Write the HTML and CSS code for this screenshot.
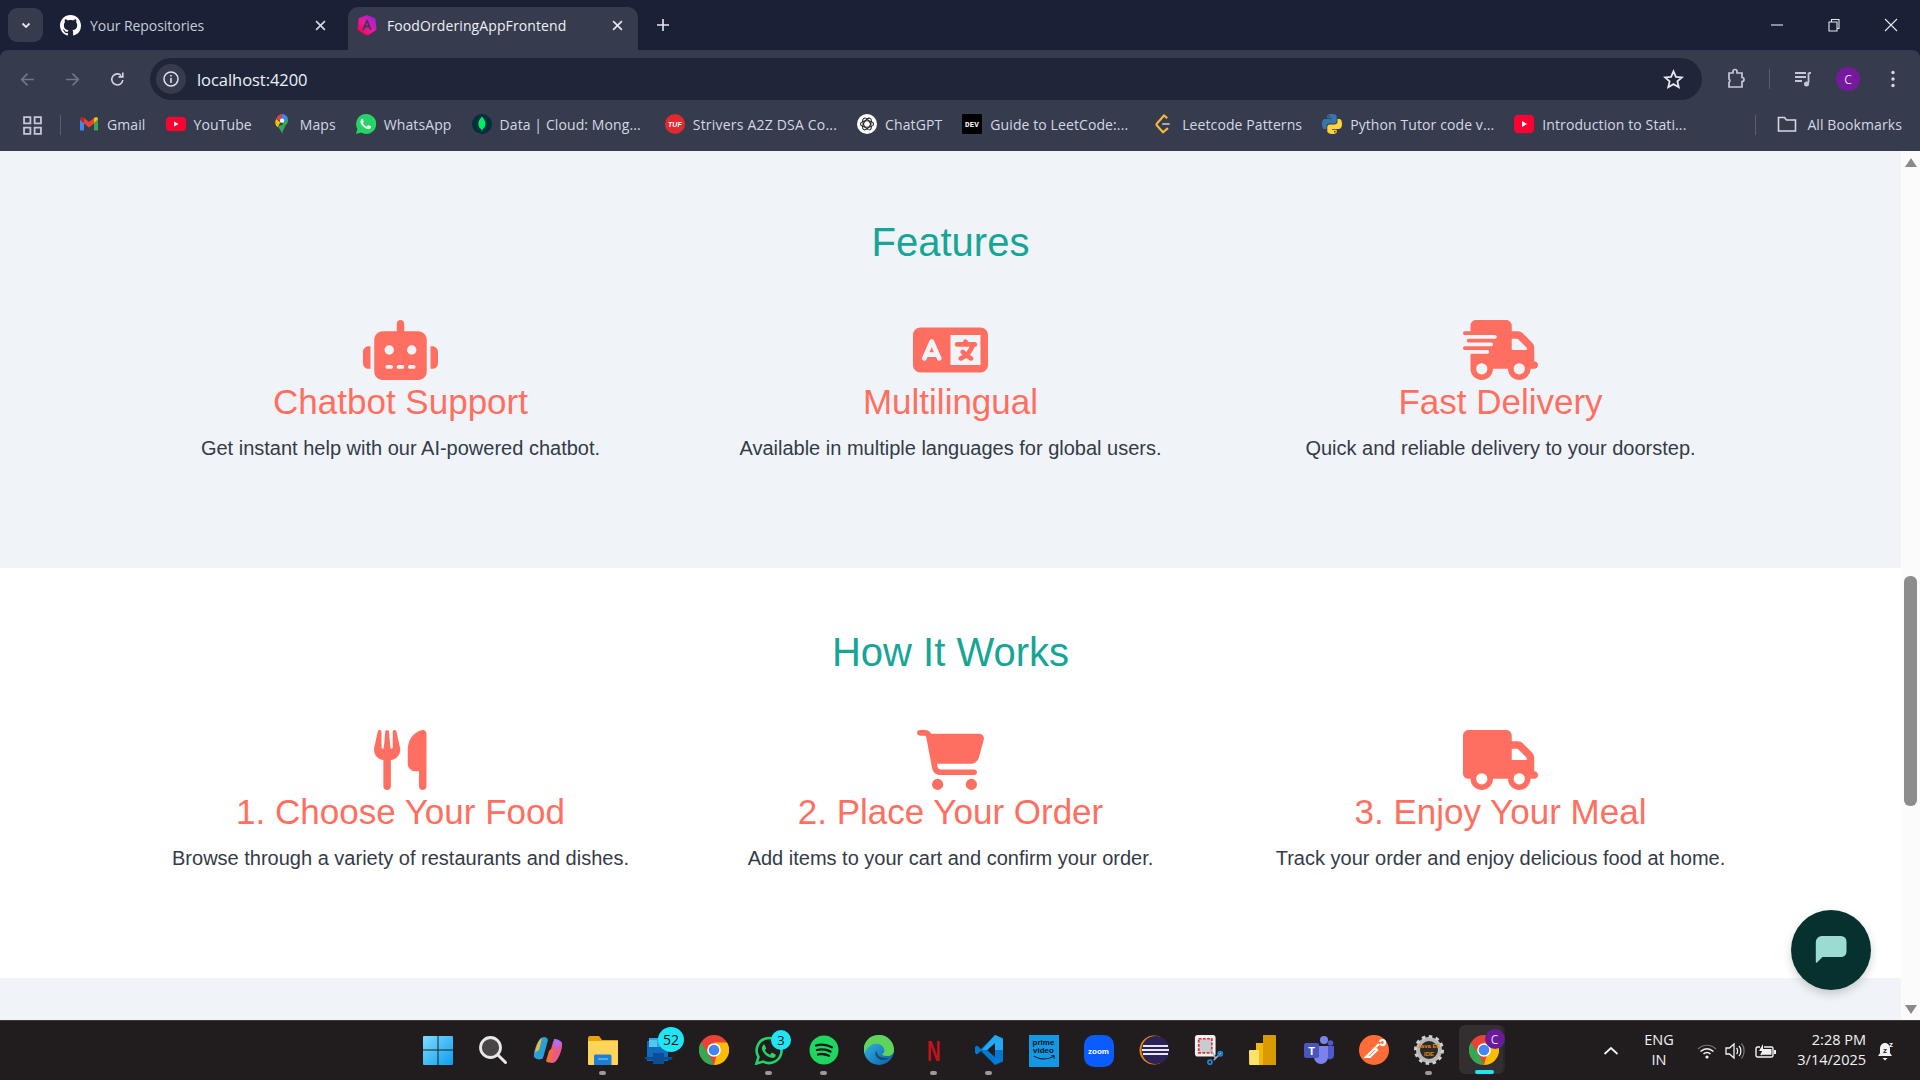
FILE: index.html
```html
<!DOCTYPE html>
<html lang="en">
<head>
<meta charset="utf-8">
<title>FoodOrderingAppFrontend</title>
<link rel="stylesheet" href="styles.css">
</head>
<body>
<div class="screen">
  <div class="tabstrip">
    <button class="tabsearch"><svg width="12" height="12" viewBox="0 0 12 12"><path d="M2.500 4.500 6 8l3.500-3.500" fill="none" stroke="#e3e5ee" stroke-width="1.800"/></svg></button>
    <div class="tab">
      <svg class="fav" viewBox="0 0 16 16"><path fill="#fff" d="M8 0C3.580 0 0 3.580 0 8c0 3.540 2.290 6.530 5.470 7.590.4.070.55-.17.55-.38 0-.19-.01-.82-.01-1.490-2.010.37-2.530-.49-2.690-.94-.09-.23-.48-.94-.82-1.130-.28-.15-.68-.52-.01-.53.63-.01 1.080.58 1.230.82.72 1.210 1.870.87 2.330.66.07-.52.28-.87.51-1.070-1.780-.2-3.640-.89-3.640-3.950 0-.87.31-1.590.82-2.150-.08-.2-.36-1.020.08-2.120 0 0 .67-.21 2.200.82.64-.18 1.320-.27 2-.27s1.360.09 2 .27c1.530-1.040 2.200-.82 2.200-.82.44 1.100.16 1.920.08 2.120.51.56.82 1.270.82 2.150 0 3.070-1.870 3.750-3.650 3.950.29.25.54.73.54 1.480 0 1.070-.01 1.930-.01 2.200 0 .21.15.46.55.38A8.010 8.010 0 0 0 16 8c0-4.420-3.580-8-8-8z"/></svg>
      <span class="tabtitle">Your Repositories</span>
      <svg class="tabclose" viewBox="0 0 10 10"><path d="M1 1l8 8M9 1l-8 8" stroke="#d5d8e2" stroke-width="1.500"/></svg>
    </div>
    <div class="tab active">
      <svg class="fav" viewBox="0 0 16 18"><defs><linearGradient id="ng" x1="0" y1="1" x2="1" y2="0"><stop offset="0" stop-color="#e40035"/><stop offset=".45" stop-color="#f0189c"/><stop offset="1" stop-color="#8a22e6"/></linearGradient></defs><path fill="url(#ng)" d="M8 0 14.800 2.600 15.800 12 9 16.500H7L.2 12 1.200 2.600zM8 3 4 12h1.800l.7-1.800h3l.7 1.800H12zM8 6.200l.9 2.400H7.100z"/></svg>
      <span class="tabtitle">FoodOrderingAppFrontend</span>
      <svg class="tabclose" viewBox="0 0 10 10"><path d="M1 1l8 8M9 1l-8 8" stroke="#e6e8f0" stroke-width="1.500"/></svg>
    </div>
    <svg class="newtab" viewBox="0 0 14 14"><path d="M7 1v12M1 7h12" stroke="#e6e8f0" stroke-width="1.600"/></svg>
    <div class="winctrls">
      <svg viewBox="0 0 14 14"><path d="M1 7h12" stroke="#e6e8f0" stroke-width="1.100"/></svg>
      <svg viewBox="0 0 14 14"><path d="M2 4h8v9H2zM4.500 4V1.500h7.500v9H10" fill="none" stroke="#e6e8f0" stroke-width="1.100"/></svg>
      <svg viewBox="0 0 14 14"><path d="M1 1l12 12M13 1 1 13" stroke="#e6e8f0" stroke-width="1.100"/></svg>
    </div>
  </div>

  <div class="toolbar">
    <svg class="navicon" viewBox="0 0 16 16"><path d="M14 8H3M8 2.500 2.500 8 8 13.500" fill="none" stroke="#72768a" stroke-width="1.500"/></svg>
    <svg class="navicon" viewBox="0 0 16 16"><path d="M2 8h11M8 2.500 13.500 8 8 13.500" fill="none" stroke="#72768a" stroke-width="1.500"/></svg>
    <svg class="navicon" viewBox="0 0 16 16"><path d="M13 8.500A5.200 5.200 0 1 1 11.500 4.200M13 1.500v4H9" fill="none" stroke="#d5d8e2" stroke-width="1.500"/></svg>
    <div class="omnibox">
      <div class="siteinfo"><svg width="18" height="18" viewBox="0 0 18 18"><circle cx="9" cy="9" r="7" fill="none" stroke="#dfe1ea" stroke-width="1.500"/><path d="M9 8v5M9 5v1.600" stroke="#dfe1ea" stroke-width="1.600"/></svg></div>
      <span class="url">localhost:4200</span>
      <svg class="star" viewBox="0 0 20 20"><path d="M10 2.200l2.300 5.300 5.700.5-4.300 3.800 1.300 5.600-5-3-5 3 1.300-5.600L2 8l5.700-.5z" fill="none" stroke="#e6e8f0" stroke-width="1.700"/></svg>
    </div>
    <div class="toolright">
      <svg class="ext" viewBox="0 0 20 22"><path d="M3 5h4V3.500a2 2 0 0 1 4 0V5h5v4.500a2 2 0 0 1 0 4V19H3v-4.500a2.200 2.200 0 0 0 0-3.500z" fill="none" stroke="#c4c8d6" stroke-width="1.700"/></svg>
      <span class="toolsep"></span>
      <svg class="media" viewBox="0 0 20 20"><path d="M2 4h11M2 8h11M2 12h7" stroke="#c4c8d6" stroke-width="1.800"/><path d="M15.500 4v10" stroke="#c4c8d6" stroke-width="1.800"/><path d="M15.500 4H18" stroke="#c4c8d6" stroke-width="1.800"/><circle cx="13.500" cy="15" r="2.500" fill="#c4c8d6"/></svg>
      <span class="avatar">C</span>
      <svg class="dots" viewBox="0 0 4 18"><circle cx="2" cy="2.500" r="1.700" fill="#d5d8e2"/><circle cx="2" cy="9" r="1.700" fill="#d5d8e2"/><circle cx="2" cy="15.500" r="1.700" fill="#d5d8e2"/></svg>
    </div>
  </div>

  <div class="bookmarks">
    <svg class="apps" viewBox="0 0 18 18"><path d="M1 1h6v6H1zM11 1h6v6h-6zM1 11h6v6H1zM11 11h6v6h-6z" fill="none" stroke="#c4c8d6" stroke-width="1.700"/></svg>
    <span class="bmsep"></span>
    <div class="bm"><svg viewBox="0 0 20 16"><path fill="#4285f4" d="M1 3.500v11h4V7z"/><path fill="#34a853" d="M15 7v7.500h4v-11z"/><path fill="#ea4335" d="M5 2v5.500l5 4 5-4V2l-5 4z"/><path fill="#c5221f" d="M1 3.500 5 7V2L3.500 1.200C2 .5 1 2 1 3.500z"/><path fill="#fbbc04" d="M19 3.500 15 7V2l1.500-.8C18 .5 19 2 19 3.500z"/></svg><span>Gmail</span></div>
    <div class="bm"><svg viewBox="0 0 20 20"><rect x="0" y="3" width="20" height="14" rx="3.500" fill="#ff0033"/><path d="M8 7.500v5l4.500-2.500z" fill="#fff"/></svg><span>YouTube</span></div>
    <div class="bm"><svg viewBox="0 0 20 24"><path fill="#34a853" d="M10 24c-1-4-3-6-5-9l5-2 4 1c-1 3-3 6-4 10z"/><path fill="#fbbc04" d="M3 14 C1 11 2 8 3 6l5 4-3 6z"/><path fill="#4285f4" d="M10 0c3 0 6 2 7 5l-5 6-4-3z"/><path fill="#ea4335" d="M3 6c1-3 4-6 7-6l-2 8z"/><path fill="#34a853" d="M17 5c1 3 0 6-3 9l-4-1 2-3z"/><circle cx="10" cy="8" r="2.600" fill="#fff"/></svg><span>Maps</span></div>
    <div class="bm"><svg viewBox="0 0 20 20"><path fill="#25d366" d="M10 0a10 10 0 0 0-8.600 15L0 20l5.200-1.400A10 10 0 1 0 10 0z"/><path fill="#fff" d="M6.800 4.500c-.4 0-1 .2-1.300.7-.6.7-1 1.600-1 2.700 0 1.200.9 2.500 1 2.700.2.200 1.800 2.800 4.400 3.900 2.100.8 2.600.7 3.100.6.600 0 1.600-.7 1.900-1.300.2-.6.2-1.200.1-1.300-.1-.1-.3-.2-.6-.4l-1.900-.9c-.3-.1-.5-.1-.7.2l-.8 1.100c-.2.200-.3.200-.6.100-1.700-.7-2.800-2-3.500-3.100-.1-.3 0-.4.200-.6l.6-.7c.1-.2.100-.4 0-.6l-.9-2c-.2-.6-.5-.5-.7-.5z"/></svg><span>WhatsApp</span></div>
    <div class="bm mongo"><svg viewBox="0 0 20 20"><circle cx="10" cy="10" r="10" fill="#02303c"/><path fill="#00ed64" d="M10 2.500c.8 1.600 3.500 3.600 3.500 7.400 0 3.200-2.200 4.800-3 5.300l-.3 2.300h-.5l-.3-2.300c-.8-.5-3-2.100-3-5.300 0-3.800 2.800-5.800 3.600-7.400z"/></svg><span>Data | Cloud: Mong...</span></div>
    <div class="bm striver"><svg viewBox="0 0 20 20"><circle cx="10" cy="10" r="10" fill="#e02a2f"/><text x="10" y="12.500" class="tuf">TUF</text></svg><span>Strivers A2Z DSA Co...</span></div>
    <div class="bm"><svg viewBox="0 0 20 20"><circle cx="10" cy="10" r="10" fill="#fff"/><g fill="none" stroke="#222" stroke-width="1.100"><ellipse cx="10" cy="10" rx="6.500" ry="3.300"/><ellipse cx="10" cy="10" rx="6.500" ry="3.300" transform="rotate(60 10 10)"/><ellipse cx="10" cy="10" rx="6.500" ry="3.300" transform="rotate(120 10 10)"/></g></svg><span>ChatGPT</span></div>
    <div class="bm"><svg viewBox="0 0 20 20"><rect width="20" height="20" rx="1.500" fill="#000"/><text x="10" y="13" class="dev">DEV</text></svg><span>Guide to LeetCode:...</span></div>
    <div class="bm leet"><svg viewBox="0 0 20 24"><path d="M12 1 3 11c-1 1-1 2 0 3l7 8 6-5M15 5l-3-3" fill="none" stroke="#f5b73d" stroke-width="2.600"/><path d="M9 12h9" stroke="#b3b3b3" stroke-width="2.200"/></svg><span>Leetcode Patterns</span></div>
    <div class="bm"><svg viewBox="0 0 20 20"><path fill="#3776ab" d="M9.800 0C5 0 5.300 2 5.300 2v2.200H10V5H3.300S0 4.600 0 9.900s2.800 5 2.800 5h1.700v-2.500s-.1-2.800 2.800-2.800h4.700s2.700 0 2.700-2.600V2.700S14.900 0 9.800 0zM7.200 1.500a.8.800 0 1 1 0 1.700.8.800 0 0 1 0-1.700z"/><path fill="#ffd43b" d="M10.200 20c4.800 0 4.500-2 4.500-2v-2.200H10V15h6.700s3.300.4 3.300-4.900-2.800-5-2.800-5h-1.700v2.500s.1 2.800-2.800 2.800H8s-2.700 0-2.700 2.600v4.300S5.100 20 10.200 20zm2.600-1.500a.8.800 0 1 1 0-1.700.8.800 0 0 1 0 1.700z"/></svg><span>Python Tutor code v...</span></div>
    <div class="bm"><svg viewBox="0 0 20 20"><rect y="1" width="20" height="18" rx="4" fill="#ff0033"/><path d="M8 7v6l5-3z" fill="#fff"/></svg><span>Introduction to Stati...</span></div>
    <div class="bmend">
      <span class="bmsep"></span>
      <div class="bm"><svg viewBox="0 0 20 20"><path d="M1.500 3.500h6l2 2.500h9v11h-17z" fill="none" stroke="#d5d8e2" stroke-width="1.600"/></svg><span>All Bookmarks</span></div>
    </div>
  </div>

  <div class="viewport">
    <main class="page">
      <section class="band tint first">
        <h2 class="heading">Features</h2>
        <div class="cards">
          <div class="card">
            <svg class="ficon wide" viewBox="0 0 640 512"><path d="M320 0c17.700 0 32 14.300 32 32V96H472c39.800 0 72 32.200 72 72V440c0 39.800-32.200 72-72 72H168c-39.800 0-72-32.200-72-72V168c0-39.800 32.200-72 72-72H288V32c0-17.700 14.300-32 32-32zM208 384c-8.800 0-16 7.200-16 16s7.200 16 16 16h32c8.800 0 16-7.200 16-16s-7.200-16-16-16H208zm96 0c-8.800 0-16 7.200-16 16s7.200 16 16 16h32c8.800 0 16-7.200 16-16s-7.200-16-16-16H304zm96 0c-8.800 0-16 7.200-16 16s7.200 16 16 16h32c8.800 0 16-7.200 16-16s-7.200-16-16-16H400zM264 256a40 40 0 1 0 -80 0 40 40 0 1 0 80 0zm152 40a40 40 0 1 0 0-80 40 40 0 1 0 0 80zM48 224H64V416H48c-26.500 0-48-21.500-48-48V272c0-26.500 21.500-48 48-48zm544 0c26.500 0 48 21.500 48 48v96c0 26.500-21.500 48-48 48H576V224h16z"/></svg>
            <h3 class="title">Chatbot Support</h3>
            <p class="desc">Get instant help with our AI-powered chatbot.</p>
          </div>
          <div class="card">
            <svg class="ficon wide" viewBox="0 0 640 512"><path d="M0 128C0 92.700 28.700 64 64 64H256h8 8H576c35.300 0 64 28.700 64 64V384c0 35.300-28.700 64-64 64H320h-8-8H64c-35.300 0-64-28.700-64-64V128zm320 0V384H576V128H320zM178.300 175.900c-3.200-7.200-10.400-11.900-18.300-11.900s-15.100 4.700-18.300 11.900l-64 144c-4.500 10.100 .1 21.900 10.200 26.400s21.900-.1 26.400-10.200l8.900-20.100h73.600l8.900 20.100c4.500 10.100 16.300 14.600 26.400 10.200s14.600-16.300 10.200-26.400l-64-144zM160 233.200L179 276H141l19-42.800zM448 164c11 0 20 9 20 20v4h44 16c11 0 20 9 20 20s-9 20-20 20h-2l-1.600 4.500c-8.900 24.400-22.400 46.600-39.600 65.400c.9 .6 1.800 1.100 2.700 1.600l18.900 11.300c9.500 5.700 12.500 18 6.900 27.400s-18 12.500-27.400 6.900l-18.900-11.300c-4.500-2.700-8.800-5.500-13.100-8.500c-10.600 7.500-21.900 14-34 19.400l-3.600 1.600c-10.100 4.500-21.900-.1-26.400-10.200s.1-21.900 10.200-26.400l3.600-1.600c6.400-2.900 12.600-6.100 18.500-9.800l-12.200-12.200c-7.800-7.800-7.800-20.500 0-28.300s20.500-7.800 28.300 0l14.600 14.600 .5 .5c12.400-13.100 22.500-28.300 29.800-45H448 376c-11 0-20-9-20-20s9-20 20-20h52v-4c0-11 9-20 20-20z"/></svg>
            <h3 class="title">Multilingual</h3>
            <p class="desc">Available in multiple languages for global users.</p>
          </div>
          <div class="card">
            <svg class="ficon wide" viewBox="0 0 640 512"><path d="M112 0C85.500 0 64 21.500 64 48V96H16c-8.800 0-16 7.200-16 16s7.200 16 16 16H64 272c8.800 0 16 7.200 16 16s-7.200 16-16 16H64 48c-8.800 0-16 7.200-16 16s7.200 16 16 16H64 240c8.800 0 16 7.200 16 16s-7.200 16-16 16H64 16c-8.800 0-16 7.200-16 16s7.200 16 16 16H64 208c8.800 0 16 7.200 16 16s-7.200 16-16 16H64V416c0 53 43 96 96 96s96-43 96-96H384c0 53 43 96 96 96s96-43 96-96h32c17.700 0 32-14.300 32-32s-14.300-32-32-32V288 256 237.300c0-17-6.700-33.300-18.700-45.300L512 114.700c-12-12-28.300-18.700-45.300-18.700H416V48c0-26.500-21.500-48-48-48H112zM544 237.300V256H416V160h50.700L544 237.300zM160 368a48 48 0 1 1 0 96 48 48 0 1 1 0-96zm272 48a48 48 0 1 1 96 0 48 48 0 1 1 -96 0z"/></svg>
            <h3 class="title">Fast Delivery</h3>
            <p class="desc">Quick and reliable delivery to your doorstep.</p>
          </div>
        </div>
      </section>
      <section class="band white">
        <h2 class="heading">How It Works</h2>
        <div class="cards">
          <div class="card">
            <svg class="ficon fork" viewBox="0 0 448 512"><path d="M416 0C400 0 288 32 288 176V288c0 35.300 28.700 64 64 64h32V480c0 17.700 14.300 32 32 32s32-14.300 32-32V352 240 32c0-17.700-14.300-32-32-32zM64 16C64 7.800 57.900 1 49.700 .1S34.200 4.600 32.400 12.500L2.100 148.800C.7 155.100 0 161.500 0 167.900c0 45.900 35.100 83.600 80 87.700V480c0 17.700 14.300 32 32 32s32-14.300 32-32V255.600c44.900-4.100 80-41.800 80-87.700c0-6.400-.7-12.800-2.100-19.100L191.600 12.500c-1.800-8-9.300-13.300-17.400-12.400S160 7.800 160 16V150.200c0 5.400-4.400 9.800-9.800 9.800c-5.100 0-9.300-3.900-9.800-9L127.900 14.600C127.200 6.300 120.300 0 112 0s-15.200 6.300-15.900 14.600L83.700 151c-.5 5.100-4.700 9-9.800 9c-5.400 0-9.800-4.400-9.800-9.800V16zm48.300 152l-.3 0-.3 0 .3-.7 .3 .7z"/></svg>
            <h3 class="title">1. Choose Your Food</h3>
            <p class="desc">Browse through a variety of restaurants and dishes.</p>
          </div>
          <div class="card">
            <svg class="ficon cart" viewBox="0 0 576 512"><path d="M0 24C0 10.700 10.700 0 24 0H69.500c22 0 41.500 12.800 50.600 32h411c26.300 0 45.500 25 38.600 50.400l-41 152.300c-8.500 31.400-37 53.300-69.500 53.300H170.700l5.400 28.500c2.200 11.300 12.100 19.500 23.600 19.500H488c13.300 0 24 10.700 24 24s-10.700 24-24 24H199.700c-34.600 0-64.300-24.600-70.700-58.500L77.400 54.500c-.7-3.800-4-6.500-7.900-6.500H24C10.700 48 0 37.300 0 24zM128 464a48 48 0 1 1 96 0 48 48 0 1 1 -96 0zm336-48a48 48 0 1 1 0 96 48 48 0 1 1 0-96z"/></svg>
            <h3 class="title">2. Place Your Order</h3>
            <p class="desc">Add items to your cart and confirm your order.</p>
          </div>
          <div class="card">
            <svg class="ficon wide" viewBox="0 0 640 512"><path d="M48 0C21.500 0 0 21.500 0 48V368c0 26.500 21.500 48 48 48H64c0 53 43 96 96 96s96-43 96-96H384c0 53 43 96 96 96s96-43 96-96h32c17.700 0 32-14.300 32-32s-14.300-32-32-32V288 256 237.300c0-17-6.700-33.300-18.700-45.300L512 114.700c-12-12-28.300-18.700-45.300-18.700H416V48c0-26.500-21.500-48-48-48H48zM416 160h50.700L544 237.300V256H416V160zM112 416a48 48 0 1 1 96 0 48 48 0 1 1 -96 0zm368-48a48 48 0 1 1 0 96 48 48 0 1 1 0-96z"/></svg>
            <h3 class="title">3. Enjoy Your Meal</h3>
            <p class="desc">Track your order and enjoy delicious food at home.</p>
          </div>
        </div>
      </section>
      <section class="band tint"></section>
    </main>
    <div class="scrollbar">
      <span class="arrow up"></span>
      <div class="track"><span class="thumb"></span></div>
      <span class="arrow down"></span>
    </div>
    <button class="chatbtn"><svg width="32" height="30" viewBox="0 0 32 30"><path fill="#9bdcd0" d="M7 1h19a5.500 5.500 0 0 1 5.500 5.500v10A5.500 5.500 0 0 1 26 22H7.500L2 27.500c-.6.500-1.200.200-1.200-.6V7A6 6 0 0 1 7 1z"/></svg></button>
  </div>

  <div class="taskbar">
    <div class="tbicons">
      <div class="tbi"><svg viewBox="0 0 30 30"><defs><linearGradient id="w" x1="0" y1="0" x2="1" y2="1"><stop offset="0" stop-color="#7fdcfc"/><stop offset="1" stop-color="#0c9df0"/></linearGradient></defs><path fill="url(#w)" d="M1 1h13.500v13.500H0V2a1 1 0 0 1 1-1zM15.500 1H29a1 1 0 0 1 1 1v12.500H15.500zM0 15.500h14.500V30H1a1 1 0 0 1-1-1zM15.500 15.500H30V29a1 1 0 0 1-1 1H15.500z"/></svg></div>
      <div class="tbi"><svg viewBox="0 0 30 30"><circle cx="12.500" cy="12.500" r="10" fill="#4a4547" stroke="#e8e8e8" stroke-width="2.800"/><path d="M20 20l7.500 7.500" stroke="#e8e8e8" stroke-width="3" stroke-linecap="round"/></svg></div>
      <div class="tbi"><svg viewBox="0 0 30 30"><path fill="#2a9fd8" d="M8 3c3-2 6-1 7 2l-5 18c-1 2-7 2-9-1-1-4 3-16 7-19z"/><path fill="#f2b93b" d="M4 10c1-3 3-6 5-7l-3 12c-1 1-3 1-4 3 0-2 1-5 2-8z"/><path fill="#e85a8a" d="M22 27c-3 2-6 1-7-2l5-18c1-2 7-2 9 1 1 4-3 16-7 19z"/><path fill="#f0703c" d="M13 26l3-10c1-2 3-2 5-1l-3 11c-1 2-3 2-5 0z"/><path fill="#b56df0" d="M21 4c3 0 7 1 8 5l-6 4c-2-3-3-6-2-9z"/></svg></div>
      <div class="tbi"><svg viewBox="0 0 30 30"><path fill="#e8a40c" d="M0 3a2 2 0 0 1 2-2h9l3 4h16v4H0z"/><path fill="#ffd45a" d="M0 6h30v23a1 1 0 0 1-1 1H1a1 1 0 0 1-1-1z"/><path fill="#1c7fd4" d="M6 21a1.500 1.500 0 0 1 1.500-1.500H22A1.500 1.500 0 0 1 23.500 21V30H6z"/><path d="M10 24h10" stroke="#7fc4f4" stroke-width="1.200"/></svg><i class="run"></i></div>
      <div class="tbi"><svg viewBox="0 0 30 30"><path fill="#0f6cbd" d="M3 6h21v20H3z"/><path fill="#28a8ea" d="M5 3h14v9H5z"/><path fill="#50c8f0" d="M5 5h8v7H5z"/><path fill="#0a4f96" d="M0 22h29l-2 3H3zM9 18h11v11H9z"/></svg><b class="badge big">52</b></div>
      <div class="tbi"><svg viewBox="0 0 30 30"><circle cx="15" cy="15" r="15" fill="#ea4335"/><path fill="#34a853" d="M2 7.500 10 20l5 10A15 15 0 0 1 2 7.500z"/><path fill="#fbbc04" d="M28 7.500H15l5 4-5 18.500A15 15 0 0 0 28 7.500z"/><circle cx="15" cy="15" r="6.800" fill="#fff"/><circle cx="15" cy="15" r="5.300" fill="#4285f4"/></svg></div>
      <div class="tbi"><svg viewBox="0 0 30 30"><path d="M15 3A12.500 12.500 0 0 0 4.500 22L2.500 28.500l6.800-1.900A12.500 12.500 0 1 0 15 3z" fill="none" stroke="#25d366" stroke-width="2.600"/><path fill="#25d366" d="M11 9c-.6 0-1.400.3-1.800 1-.8.900-1.300 2.100-1.300 3.500 0 1.600 1.200 3.300 1.300 3.500.3.300 2.400 3.700 5.800 5.100 2.700 1 3.400.9 4 .8.800 0 2.100-.9 2.500-1.700.3-.8.300-1.600.1-1.700l-3.300-1.700c-.4-.1-.6-.1-.9.300l-1 1.400c-.3.300-.4.300-.8.100-2.200-.9-3.700-2.600-4.600-4.100-.1-.4 0-.5.300-.8l.8-.9c.1-.3.100-.5 0-.8l-1.200-2.600c-.3-.8-.7-.7-.9-.7z"/></svg><b class="badge small">3</b><i class="run"></i></div>
      <div class="tbi"><svg viewBox="0 0 30 30"><circle cx="15" cy="15" r="14.500" fill="#1ed760"/><path d="M7 10.500c5-1.500 11-1 16 1.800M8 15c4.500-1.200 9.500-.7 13.500 1.600M9 19.500c3.500-.9 7.500-.5 11 1.300" fill="none" stroke="#1c1a1b" stroke-width="2.300" stroke-linecap="round"/></svg><i class="run"></i></div>
      <div class="tbi"><svg viewBox="0 0 30 30"><defs><linearGradient id="e" x1="0" y1="0" x2="1" y2="1"><stop offset="0" stop-color="#35c1f1"/><stop offset="1" stop-color="#0c59a4"/></linearGradient></defs><circle cx="15" cy="15" r="15" fill="url(#e)"/><path fill="#5fd35a" d="M15 0a15 15 0 0 1 15 15c0 4-3 6-7 6-3 0-5-1-5-2 3-1 3-4 1-7-3-4-9-4-13-1-3 2-5 5-6 8A15 15 0 0 1 15 0z"/><path fill="#1c1a1b" opacity=".5" d="M12 16c-2 3 0 8 6 9 3 0 5-1 7-2-3 0-9 0-11-3-1-2-1-3-2-4z"/></svg></div>
      <div class="tbi"><span class="netflix">N</span><i class="run"></i></div>
      <div class="tbi"><svg viewBox="0 0 30 30"><path fill="#0078d4" d="M21 0 29 3.500v23L21 30 7 16l-4 3.500-2-1.500v-6l2-1.500L7 14 21 0zM21 8l-8 7 8 7z"/><path fill="#23a9f2" d="M21 0 29 3.500V15H21V8l-8 7H8z"/></svg><i class="run"></i></div>
      <div class="tbi"><span class="prime"><b>prime<br>video</b><svg viewBox="0 0 24 5" width="22" height="5"><path d="M1 1c6 4 15 4 21 .5M20 .5h3v3" fill="none" stroke="#111" stroke-width="1.100"/></svg></span></div>
      <div class="tbi"><span class="zoomapp">zoom</span></div>
      <div class="tbi"><svg viewBox="0 0 30 30"><circle cx="15" cy="15" r="14.500" fill="#e8890c"/><circle cx="16.500" cy="15" r="14" fill="#2c2255"/><path d="M4 11h25M3 15h27M4 19h25" stroke="#e8e6f4" stroke-width="2"/></svg></div>
      <div class="tbi"><svg viewBox="0 0 30 32"><rect x="0" y="0" width="22" height="23" rx="3" fill="#f1f1f1"/><rect x="4" y="4" width="14" height="15" fill="#c8ccd2" stroke="#d8332c" stroke-width="1.800" stroke-dasharray="3 1.500"/><path d="M17 15l5 10M28 19l-8 8" stroke="#aeb4bc" stroke-width="1.600"/><circle cx="16" cy="29" r="2.200" fill="none" stroke="#1c88d8" stroke-width="1.800"/><circle cx="27" cy="20" r="2.200" fill="none" stroke="#1c88d8" stroke-width="1.800"/></svg></div>
      <div class="tbi"><svg viewBox="0 0 30 30"><path fill="#f2c811" d="M0 16h11v14H1a1 1 0 0 1-1-1z"/><path fill="#f0b90b" d="M7 8h12v22H7z"/><path fill="#d99a00" d="M14 0h12a1 1 0 0 1 1 1v29H14z"/><path fill="#fbe26c" d="M0 16a1 1 0 0 1 1-1h9v15H1z"/></svg></div>
      <div class="tbi"><svg viewBox="0 0 30 30"><circle cx="20" cy="5" r="4" fill="#7b83eb"/><circle cx="26.500" cy="8" r="2.800" fill="#5059c9"/><path fill="#5059c9" d="M23 11h7v9a4 4 0 0 1-7 3z"/><path fill="#7b83eb" d="M10 11h14v11a7 7 0 0 1-14 0z"/><rect x="0" y="8" width="15" height="15" rx="2" fill="#4b53bc"/><text x="7.500" y="20" class="teams">T</text></svg></div>
      <div class="tbi"><svg viewBox="0 0 30 30"><circle cx="15" cy="15" r="15" fill="#ff6c37"/><path d="M7 22l9-9 2 2-7 7zM17 12l3-3M21 7a2.500 2.500 0 1 1 2 3l-2-1" fill="none" stroke="#fff" stroke-width="2.200"/></svg></div>
      <div class="tbi"><svg viewBox="0 0 30 30"><circle cx="15" cy="15" r="11" fill="#2a2a2a" stroke="#b8b8b8" stroke-width="4"/><circle cx="15" cy="15" r="13.500" fill="none" stroke="#d0d0d0" stroke-width="3" stroke-dasharray="3.500 3.500"/><text x="15" y="13" class="java">Java EE</text><text x="15" y="21" class="java">IDE</text></svg><i class="run"></i></div>
      <div class="tbi activeapp"><svg viewBox="0 0 30 30"><circle cx="15" cy="15" r="15" fill="#ea4335"/><path fill="#34a853" d="M2 7.500 10 20l5 10A15 15 0 0 1 2 7.500z"/><path fill="#fbbc04" d="M28 7.500H15l5 4-5 18.500A15 15 0 0 0 28 7.500z"/><circle cx="15" cy="15" r="6.800" fill="#fff"/><circle cx="15" cy="15" r="5.300" fill="#4285f4"/></svg><b class="badge purple">C</b><i class="runline"></i></div>
    </div>
    <div class="tray">
      <svg class="chev" viewBox="0 0 16 10"><path d="M1.500 8 8 2l6.500 6" fill="none" stroke="#f2f2f2" stroke-width="1.800"/></svg>
      <div class="lang"><span>ENG</span><span>IN</span></div>
      <svg class="wifi" viewBox="0 0 20 16"><path d="M1 6c5-5 13-5 18 0" fill="none" stroke="#777" stroke-width="1.200"/><path d="M3.500 8.500c4-3.500 9-3.500 13 0M6.500 11c2-2 5-2 7 0" fill="none" stroke="#f2f2f2" stroke-width="1.500"/><circle cx="10" cy="14" r="1.600" fill="#f2f2f2"/></svg>
      <svg class="vol" viewBox="0 0 20 18"><path d="M1 6h3.500L9 2v14l-4.500-4H1z" fill="none" stroke="#f2f2f2" stroke-width="1.300"/><path d="M11.500 6c1.500 1.500 1.500 4.500 0 6M14 4c2.500 2.500 2.500 7.500 0 10" fill="none" stroke="#f2f2f2" stroke-width="1.300"/><path d="M16.500 1.500c3.500 4 3.500 11 0 15" fill="none" stroke="#777" stroke-width="1.200"/></svg>
      <svg class="batt" viewBox="0 0 22 16"><path d="M5 4H2.500A1.500 1.500 0 0 0 1 5.500v7A1.500 1.500 0 0 0 2.500 14h14a1.500 1.500 0 0 0 1.500-1.500v-7A1.500 1.500 0 0 0 16.500 4H9" fill="none" stroke="#f2f2f2" stroke-width="1.400"/><path d="M8 1 4 8h3l-1 5 5-7H8z" fill="#f2f2f2"/><path d="M19 7h2v4h-2z" fill="#f2f2f2"/><path d="M3 11.800h13.500V6H9l-4 5.800z" fill="#f2f2f2"/></svg>
      <div class="clock"><span>2:28 PM</span><span>3/14/2025</span></div>
      <svg class="bell" viewBox="0 0 18 20"><path d="M9 2c3 0 5 2.500 5 5.500V12l2 3H2l2-3V7.500C4 4.500 6 2 9 2zM6.500 17h5L9 19.500z" fill="#f2f2f2"/><text x="9" y="12" class="zz">z</text><text x="15" y="6" class="zz2">z</text></svg>
    </div>
  </div>
</div>
</body>
</html>
```
FILE: styles.css
```css
* { box-sizing: border-box; }
html, body { margin: 0; padding: 0; height: 100%; overflow: hidden; }
body { font-family: "Open Sans", "Noto Sans", sans-serif; }
button { border: 0; padding: 0; }
svg { display: block; }

.screen { width: 1920px; height: 1080px; display: flex; flex-direction: column; background: #1a2035; position: relative; }

/* tab strip */
.tabstrip { height: 50px; flex: none; display: flex; align-items: flex-end; padding-left: 8px; background: #1a2035; color: #e6e8f0; }
.tabsearch { width: 35px; height: 34px; margin-bottom: 8px; border-radius: 9px; background: #363b4e; display: flex; align-items: center; justify-content: center; flex: none; }
.tab { width: 300px; height: 43px; display: flex; align-items: center; padding: 0 22.500px 6px 12px; margin-left: 5px; border-radius: 10px 10px 0 0; font-size: 14px; color: #c8cbd8; flex: none; }
.tab.active { width: 290px; margin-left: 0; background: #363b4e; color: #eef0f6; padding: 0 15.500px 6px 9px; }
.fav { width: 21px; height: 21px; flex: none; }
.tab.active .fav { width: 20px; height: 22px; }
.tabtitle { margin-left: 9px; flex: 1; white-space: nowrap; letter-spacing: -.05px; }
.tab.active .tabtitle { margin-left: 10px; letter-spacing: .1px; }
.tabclose { width: 11px; height: 11px; flex: none; }
.newtab { width: 14px; height: 14px; margin: 0 0 18px 18px; flex: none; }
.winctrls { margin-left: auto; display: flex; gap: 43px; padding-right: 22px; margin-bottom: 18px; }
.winctrls svg { width: 14px; height: 14px; }

/* toolbar */
.toolbar { height: 54px; flex: none; display: flex; align-items: flex-start; padding: 8px 0 0 19px; background: #363b4e; border-radius: 8px 8px 0 0; }
.navicon { width: 17px; height: 17px; margin: 13px 28px 0 0; flex: none; }
.omnibox { width: 1552px; height: 42px; margin-left: -4px; border-radius: 21px; background: #20263a; display: flex; align-items: center; padding: 0 18px 0 6px; flex: none; }
.siteinfo { width: 30px; height: 30px; border-radius: 50%; background: #363b4e; display: flex; align-items: center; justify-content: center; flex: none; }
.url { margin-left: 11px; font-size: 16.500px; color: #eef0f6; letter-spacing: -.05px; }
.star { width: 21px; height: 21px; margin-left: auto; }
.toolright { flex: 1; display: flex; align-items: center; height: 42px; padding-left: 24px; }
.ext { width: 20px; height: 22px; }
.toolsep { width: 1px; height: 20px; background: #5a5e70; margin: 0 23px 0 23px; }
.media { width: 20px; height: 20px; }
.avatar { width: 24px; height: 24px; margin-left: 23px; border-radius: 50%; background: #76199f; color: #e9d6f2; font-size: 12px; display: flex; align-items: center; justify-content: center; }
.dots { width: 4px; height: 18px; margin-left: 31px; }

/* bookmarks */
.bookmarks { height: 47px; flex: none; display: flex; align-items: flex-start; padding: 7px 0 0 23px; background: #363b4e; font-size: 14px; color: #d5d8e2; }
.apps { width: 19px; height: 19px; margin-top: 5px; flex: none; }
.bmsep { width: 1px; height: 20px; background: #5a5e70; margin-top: 4px; flex: none; }
.bookmarks > .bmsep { margin: 4px 18px 0 18px; }
.bm { display: flex; align-items: center; height: 26px; margin-right: 20px; white-space: nowrap; flex: none; letter-spacing: .1px; }
.bm svg { width: 20px; height: 20px; margin-right: 8px; flex: none; }
.bm.mongo { margin-right: 24px; }
.bm.striver { letter-spacing: .2px; }
.bm.leet svg { margin: 0 9px 0 5px; }
.bmend { margin-left: auto; display: flex; }
.bmend .bmsep { margin-right: 21px; }
.bmend .bm { margin-right: 18px; }
.bmend .bm svg { margin-right: 10px; }
.tuf { font: italic 700 7px "Liberation Sans", sans-serif; fill: #fff; text-anchor: middle; }
.dev { font: 700 7.500px "Liberation Mono", monospace; fill: #fff; text-anchor: middle; }

/* page */
.viewport { height: 869px; flex: none; display: flex; position: relative; overflow: hidden; }
.page { flex: 1; min-width: 0; font-family: "Liberation Sans", Arial, sans-serif; }
.band { height: 410px; padding-top: 61px; }
.band.first { height: 417px; padding-top: 68px; }
.tint { background: #f0f4f8; }
.white { background: #fff; }
.heading { margin: 0 0 55px; font-size: 40px; line-height: 46px; font-weight: 400; color: #16a596; text-align: center; }
.cards { display: grid; grid-template-columns: repeat(3, 550px); justify-content: center; }
.card { text-align: center; }
.ficon { height: 60px; margin: 0 auto; fill: #ff6f61; }
.wide { width: 75px; }
.fork { width: 52.500px; }
.cart { width: 67.500px; }
.title { margin: 3px 0 17px; font-size: 35px; line-height: 37px; font-weight: 400; color: #ff6f61; }
.desc { margin: 0; font-size: 20px; line-height: 23px; color: #333b48; white-space: nowrap; }

.scrollbar { width: 19px; flex: none; background: #fbfbfb; display: flex; flex-direction: column; align-items: center; }
.arrow { width: 0; height: 0; flex: none; border-left: 6.500px solid transparent; border-right: 6.500px solid transparent; }
.arrow.up { border-bottom: 9px solid #8a8a8a; margin-top: 7px; }
.arrow.down { border-top: 9px solid #8a8a8a; margin-bottom: 6px; }
.track { flex: 1; width: 100%; padding: 409px 3px 0; }
.thumb { display: block; height: 230px; border-radius: 6px; background: #8c8c8c; }
.chatbtn { position: absolute; left: 1791px; top: 759px; width: 80px; height: 80px; border-radius: 50%; background: #07312f; box-shadow: 0 4px 10px rgba(0,0,0,.18); display: flex; align-items: center; justify-content: center; }

/* taskbar */
.taskbar { height: 60px; flex: none; background: #211d1e; border-top: 1px solid #3c3a3a; display: flex; position: relative; color: #f2f2f2; }
.tbicons { margin-left: 410px; display: flex; }
.tbi { width: 55px; height: 59px; position: relative; flex: none; display: flex; justify-content: center; padding-top: 14px; }
.tbi:nth-child(4) { margin-right: 1px; }
.tbi > svg { width: 30px; height: 30px; flex: none; }
.run { position: absolute; left: 24px; top: 50px; width: 7px; height: 4px; border-radius: 2px; background: #9a9a9a; }
.activeapp { background: #332f30; width: 44px; height: 49px; margin: 4px 8px 0 3px; padding-top: 10px; border-radius: 6px; box-shadow: 2px 0 0 #2b2728; }
.activeapp > svg { margin-left: 6px; }
.runline { position: absolute; left: 15.500px; top: 45px; width: 19px; height: 4px; border-radius: 2px; background: #1fe6f5; }
.badge { position: absolute; display: flex; align-items: center; justify-content: center; border-radius: 50%; font-family: "Open Sans", sans-serif; font-weight: 400; color: #111; background: #1fe6f5; }
.badge.big { width: 26px; height: 25px; left: 27px; top: 6px; font-size: 14px; }
.badge.small { width: 20px; height: 20px; left: 30px; top: 9px; font-size: 13px; }
.badge.purple { width: 20px; height: 20px; left: 25.600px; top: 4px; font-size: 12px; background: #6a1b9a; color: #e9d6f2; }
.netflix { font: 700 30px "Liberation Sans", sans-serif; color: #c8101c; line-height: 32px; transform: scaleX(.62); display: block; }
.prime { width: 30px; height: 32px; background: #1399e6; color: #111; font-size: 8px; line-height: 8px; font-family: "Liberation Sans", sans-serif; display: flex; flex-direction: column; align-items: center; padding-top: 4px; }
.prime b { text-align: center; }
.prime svg { width: 22px; height: 5px; }
.zoomapp { width: 30px; height: 32px; border-radius: 10px; background: #0b5cff; color: #fff; font: 700 8px "Liberation Sans", sans-serif; display: flex; align-items: center; justify-content: center; }
.teams { font: 700 11px "Liberation Sans", sans-serif; fill: #fff; text-anchor: middle; }
.java { font: 700 6px "Liberation Sans", sans-serif; fill: #e8890c; text-anchor: middle; }
.zz { font: 700 8px "Liberation Sans", sans-serif; fill: #211d1e; text-anchor: middle; }
.zz2 { font: 700 8px "Liberation Sans", sans-serif; fill: #f2f2f2; text-anchor: middle; }

.tray { position: absolute; right: 0; top: 0; bottom: 0; width: 320px; display: flex; align-items: center; }
.chev { width: 16px; height: 10px; margin-left: 3px; flex: none; }
.lang { width: 40px; margin-left: 20px; padding-bottom: 1px; display: flex; flex-direction: column; align-items: center; font-size: 14.500px; line-height: 20px; }
.wifi { width: 20px; height: 16px; margin-left: 18px; flex: none; }
.vol { width: 20px; height: 18px; margin-left: 8px; flex: none; }
.batt { width: 22px; height: 16px; margin-left: 10px; flex: none; }
.clock { width: 88px; margin-left: 1px; padding-bottom: 2px; display: flex; flex-direction: column; align-items: flex-end; font-size: 14.500px; line-height: 20px; }
.bell { width: 18px; height: 20px; margin-left: 10px; flex: none; }
```
